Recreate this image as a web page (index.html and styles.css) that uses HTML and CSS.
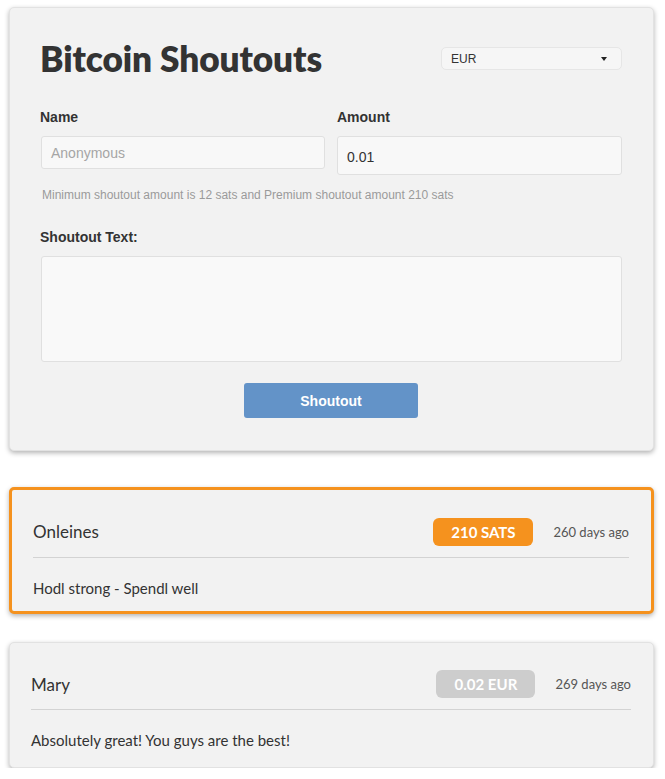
FILE: index.html
```html
<!DOCTYPE html>
<html>
<head>
<meta charset="utf-8">
<link rel="stylesheet" href="styles.css">
</head>
<body>
<div class="page">
  <div class="card form-card">
    <div class="head">
      <h1 class="title">Bitcoin Shoutouts</h1>
      <div class="select"><span>EUR</span><span class="caret"></span></div>
    </div>
    <div class="row">
      <div class="col">
        <label class="lbl">Name</label>
        <div class="input name-input placeholder">Anonymous</div>
      </div>
      <div class="col">
        <label class="lbl">Amount</label>
        <div class="input amount-input">0.01</div>
      </div>
    </div>
    <p class="help">Minimum shoutout amount is 12 sats and Premium shoutout amount 210 sats</p>
    <label class="lbl text-lbl">Shoutout Text:</label>
    <div class="textarea"></div>
    <div class="btn-row"><button class="btn">Shoutout</button></div>
  </div>

  <div class="card shout premium">
    <div class="shout-head">
      <span class="who">Onleines</span>
      <span class="badge orange">210 SATS</span>
      <span class="ago">260 days ago</span>
    </div>
    <div class="msg">Hodl strong - Spendl well</div>
  </div>

  <div class="card shout plain">
    <div class="shout-head">
      <span class="who">Mary</span>
      <span class="badge grey">0.02 EUR</span>
      <span class="ago">269 days ago</span>
    </div>
    <div class="msg">Absolutely great! You guys are the best!</div>
  </div>
</div>
</body>
</html>
```

FILE: styles.css
```css
* { box-sizing: border-box; }
html, body { margin: 0; padding: 0; background: #fff; }
body { font-family: "Liberation Sans", Arial, sans-serif; color: #333; }
.page { padding: 7px 11px 0 9px; display: flex; flex-direction: column; }
.card {
  background: #f2f2f2;
  border-radius: 5px;
  box-shadow: 0 2px 5px rgba(0,0,0,0.3);
  border: 1px solid #e2e2e2;
}
.form-card { padding: 28px 31px 31px 30px; height: 444px; }
.head { display: flex; justify-content: space-between; align-items: flex-start; }
.title {
  margin: 0; font-family: "Lato", sans-serif; font-weight: 800; font-size: 35.2px;
  color: #333; line-height: 44px; letter-spacing: -0.1px;
}
.select {
  margin-top: 11px; width: 181px; height: 23px; background: #f6f6f6;
  border: 1px solid #e6e6e6; border-radius: 5px;
  display: flex; align-items: center; justify-content: space-between;
  padding: 0 14px 0 9px; font-size: 12px; color: #333;
}
.caret { width: 0; height: 0; border-left: 3px solid transparent; border-right: 3px solid transparent; border-top: 4px solid #222; }
.row { display: flex; gap: 12px; margin-top: 29px; }
.col { flex: 1; display: flex; flex-direction: column; }
.col:first-child .input { margin-left: 1px; }
.lbl { font-weight: 700; font-size: 14px; color: #333; display: block; line-height: 16px; }
.input {
  margin-top: 11px; background: #f8f8f8; border: 1px solid #e0e0e0; border-radius: 3px;
  font-size: 14px; display: flex; align-items: center; padding: 0 9px; color: #333;
}
.name-input { height: 33px; }
.amount-input { height: 39px; padding-top: 3px; }
.placeholder { color: #a5a5a5; }
.help { margin: 13px 0 0 2px; font-size: 12px; color: #9a9a9a; line-height: 14px; }
.text-lbl { margin-top: 27px; }
.textarea {
  margin: 11px 0 0 1px; height: 106px; background: #f9f9f9; border: 1px solid #e0e0e0; border-radius: 3px;
}
.btn-row { display: flex; justify-content: center; margin-top: 21px; }
.btn {
  width: 174px; height: 35px; background: #6393c8; color: #fff; border: none; border-radius: 3px;
  font-family: "Liberation Sans", Arial, sans-serif; font-weight: 700; font-size: 14px;
}
.shout { font-family: "Lato", sans-serif; }
.premium { margin-top: 36px; border: 3px solid #f5921e; padding: 0 22px 0 21px; height: 127px; }
.plain { margin-top: 28px; padding: 0 22px 0 21px; height: 126px; }
.shout-head {
  display: flex; align-items: center; border-bottom: 1px solid #d3d3d3;
  height: 68px; padding-top: 16px;
}
.plain .shout-head { height: 67px; padding-top: 16px; }
.who { flex: 1; font-size: 17px; color: #333; }
.badge {
  height: 28px; border-radius: 6px; color: #fff; font-size: 15px; font-weight: 700;
  display: flex; align-items: center; justify-content: center; margin-right: 20px;
}
.orange { background: #f5921e; width: 100px; }
.grey { background: #cdcdcd; width: 99px; }
.ago { font-size: 13px; color: #555; }
.msg { font-size: 15px; color: #333; padding-top: 21px; }
```
